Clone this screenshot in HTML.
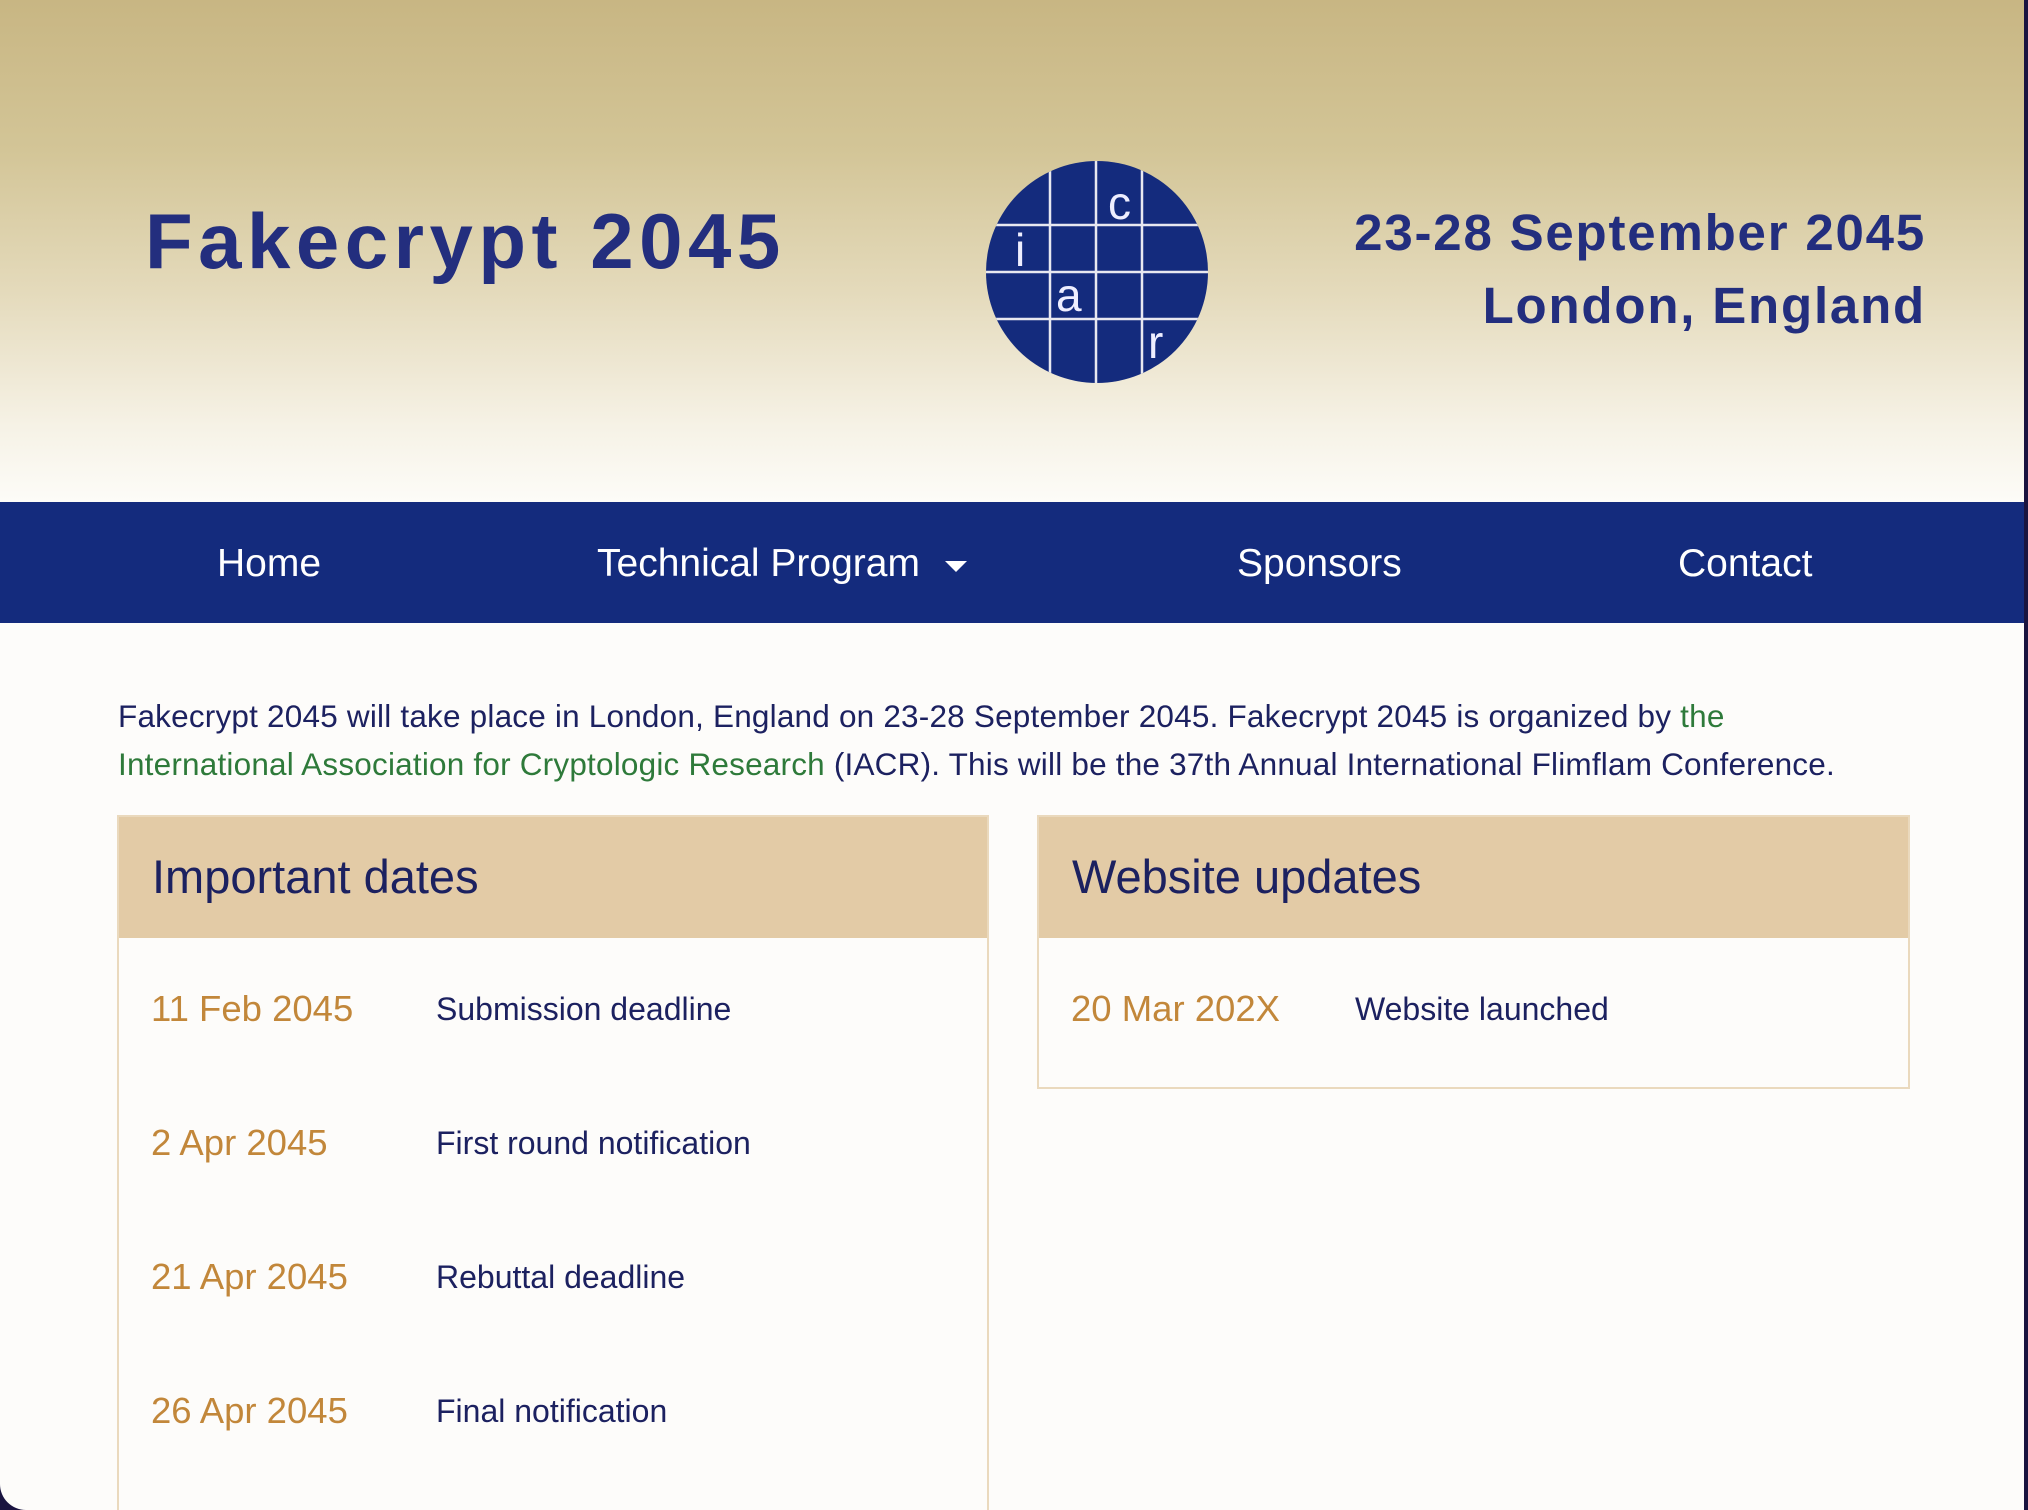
<!DOCTYPE html>
<html><head><meta charset="utf-8"><style>
*{margin:0;padding:0;box-sizing:border-box}
html,body{width:2028px;height:1510px;overflow:hidden;background:#1a1440}
.page{position:absolute;left:0;top:0;width:2024px;height:1510px;background:#fdfcfa;border-bottom-left-radius:26px;overflow:hidden;font-family:"Liberation Sans",Arial,sans-serif}
.hdr{position:absolute;left:0;top:0;width:2024px;height:502px;background:linear-gradient(180deg,#c8b683 0%,#d3c597 30%,#e4dabb 58%,#f6f2e6 85%,#fdfcf8 100%)}
.title{position:absolute;left:145px;top:196px;font-size:78px;font-weight:bold;letter-spacing:5.5px;color:#232e7e}
.rt{position:absolute;right:98px;top:196px;text-align:right;font-size:51px;font-weight:bold;letter-spacing:1.8px;color:#232e7e;line-height:73px}
.nav{position:absolute;left:0;top:502px;width:2024px;height:121px;background:#142b7d;color:#fff;font-size:39px}
.nav span{position:absolute;top:40px}
.p{position:absolute;left:118px;top:692px;width:1770px;font-size:31.5px;letter-spacing:0.2px;line-height:48px;color:#1c2160}
.p a{color:#2e7a3a;text-decoration:none}
.card{position:absolute;border:2px solid #ead9bd;background:#fdfcfa}
.card .h{height:121px;background:#e3cba6;font-size:47px;color:#1c2160;padding:32px 0 0 33px}
.row{position:absolute;font-size:36.5px;color:#c2873a}
.ev{position:absolute;font-size:32px;color:#1c2160}
</style></head><body><div class="page">
<div class="hdr">
<div class="title">Fakecrypt 2045</div>
<svg style="position:absolute;left:986px;top:161px" width="222" height="222" viewBox="0 0 222 222">
<defs><clipPath id="c"><circle cx="111" cy="111" r="111"/></clipPath></defs>
<circle cx="111" cy="111" r="111" fill="#142b7d"/>
<g clip-path="url(#c)" stroke="#e8e8f0" stroke-width="2.5">
<line x1="64" y1="0" x2="64" y2="222"/><line x1="110" y1="0" x2="110" y2="222"/><line x1="156" y1="0" x2="156" y2="222"/>
<line x1="0" y1="64" x2="222" y2="64"/><line x1="0" y1="111" x2="222" y2="111"/><line x1="0" y1="158" x2="222" y2="158"/>
</g>
<g fill="#eef" font-family="Liberation Sans,sans-serif" font-size="46">
<text x="122" y="58">c</text><text x="29" y="105">i</text><text x="70" y="150">a</text><text x="162" y="197">r</text></g>
</svg>
<div class="rt">23-28 September 2045<br>London, England</div>
</div>
<div class="nav">
<span style="left:217px">Home</span>
<span style="left:597px">Technical Program <svg width="24" height="14" style="margin-left:14px;vertical-align:middle"><path d="M0 2h22L11 13z" fill="#fff"/></svg></span>
<span style="left:1237px">Sponsors</span>
<span style="left:1678px">Contact</span>
</div>
<div class="p">Fakecrypt 2045 will take place in London, England on 23-28 September 2045. Fakecrypt 2045 is organized by <a>the International Association for Cryptologic Research</a> (IACR). This will be the 37th Annual International Flimflam Conference.</div>
<div class="card" style="left:117px;top:815px;width:872px;height:720px"><div class="h">Important dates</div></div>
<div class="card" style="left:1037px;top:815px;width:873px;height:274px"><div class="h">Website updates</div></div>
<div class="row" style="left:151px;top:988px">11 Feb 2045</div><div class="ev" style="left:436px;top:991px">Submission deadline</div>
<div class="row" style="left:151px;top:1122px">2 Apr 2045</div><div class="ev" style="left:436px;top:1125px">First round notification</div>
<div class="row" style="left:151px;top:1256px">21 Apr 2045</div><div class="ev" style="left:436px;top:1259px">Rebuttal deadline</div>
<div class="row" style="left:151px;top:1390px">26 Apr 2045</div><div class="ev" style="left:436px;top:1393px">Final notification</div>
<div class="row" style="left:1071px;top:988px">20 Mar 202X</div><div class="ev" style="left:1355px;top:991px">Website launched</div>
</div></body></html>
